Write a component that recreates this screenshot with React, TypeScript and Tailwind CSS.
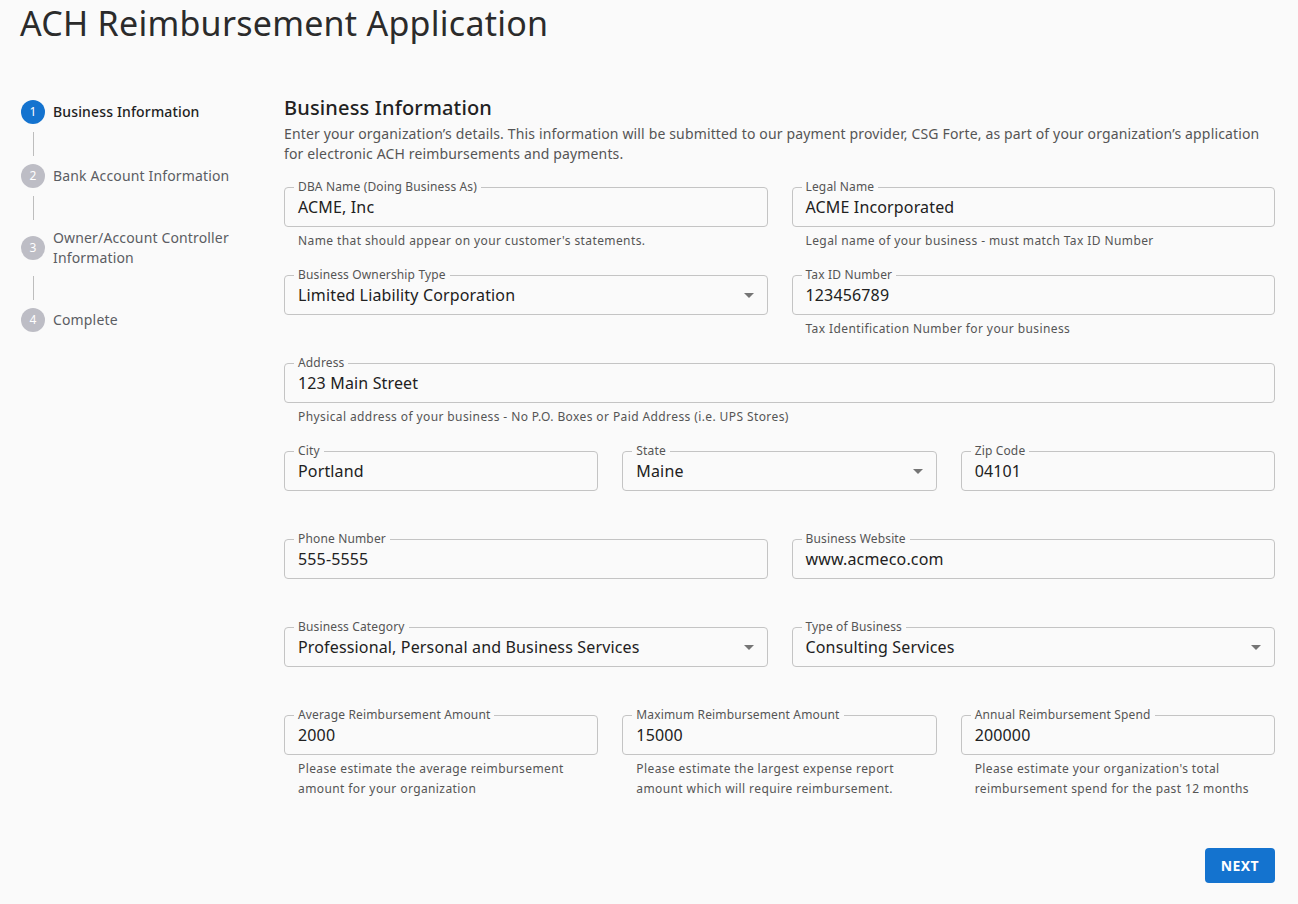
import { ReactNode } from "react";

const steps = [
  { n: 1, label: "Business Information", active: true },
  { n: 2, label: "Bank Account Information", active: false },
  { n: 3, label: "Owner/Account Controller Information", active: false },
  { n: 4, label: "Complete", active: false },
];

function Caret() {
  return (
    <svg width="10" height="5" viewBox="0 0 10 5" className="shrink-0">
      <path d="M0 0h10L5 5z" fill="#757575" />
    </svg>
  );
}

function Field({
  label,
  value,
  helper,
  select,
}: {
  label: string;
  value: string;
  helper?: ReactNode;
  select?: boolean;
}) {
  return (
    <div className="flex flex-col min-w-0">
      <div className="relative h-10 rounded border border-[#c4c4c4] flex items-center justify-between pl-[13px] pr-[13px]">
        <span className="absolute -top-[8px] left-[9px] bg-[#fafafa] px-[4px] text-[12px] leading-[14px] tracking-[0.15px] text-[#555]">
          {label}
        </span>
        <span className="text-[16px] tracking-[0.15px] text-[#212121]">{value}</span>
        {select && <Caret />}
      </div>
      {helper && (
        <p className="mt-[4px] pl-[14px] text-[12px] leading-[20px] tracking-[0.4px] text-[#555]">
          {helper}
        </p>
      )}
    </div>
  );
}

export default function App() {
  return (
    <div
      className="min-h-[904px] bg-[#fafafa] text-[#212121]"
      style={{ fontFamily: '"Noto Sans", sans-serif' }}
    >
      <div className="px-5 pt-[1px]">
        <h1 className="text-[34px] leading-[44px] tracking-[0.25px] text-[#2b2b2b]">
          ACH Reimbursement Application
        </h1>
      </div>

      <div className="flex pl-[21px] pr-[23px] pt-[49px]">
        {/* Stepper */}
        <nav className="w-[239px] shrink-0 mr-6 pt-[6px]">
          {steps.map((s, i) => (
            <div key={s.n}>
              <div className="flex items-center">
                <span
                  className={
                    s.active
                      ? "w-6 h-6 rounded-full bg-[#1473cf] text-white text-[12px] flex items-center justify-center shrink-0"
                      : "w-6 h-6 rounded-full bg-[#bdbdc5] text-white text-[12px] flex items-center justify-center shrink-0"
                  }
                >
                  {s.n}
                </span>
                <span
                  className={
                    s.active
                      ? "ml-2 text-[14px] leading-5 tracking-[0.15px] font-medium text-[#222]"
                      : "ml-2 text-[14px] leading-5 tracking-[0.15px] text-[#5b5d63]"
                  }
                >
                  {s.n === 3 ? (
                    <>
                      Owner/Account Controller
                      <br />
                      Information
                    </>
                  ) : (
                    s.label
                  )}
                </span>
              </div>
              {i < steps.length - 1 && (
                <div className="ml-[12px] my-2 h-6 w-px bg-[#bdbdbd]" />
              )}
            </div>
          ))}
        </nav>

        {/* Form */}
        <main className="flex-1 min-w-0">
          <h2 className="text-[20px] leading-7 tracking-[0.15px] font-medium text-[#222]">
            Business Information
          </h2>
          <p className="mt-[2px] text-[14px] leading-5 tracking-[0.15px] text-[#555]">
            Enter your organization’s details. This information will be submitted to our payment
            provider, CSG Forte, as part of your organization’s application for electronic ACH
            reimbursements and payments.
          </p>

          <div className="mt-[23px] flex flex-col">
            <div className="grid grid-cols-2 gap-x-6 h-[88px]">
              <Field
                label="DBA Name (Doing Business As)"
                value="ACME, Inc"
                helper="Name that should appear on your customer's statements."
              />
              <Field
                label="Legal Name"
                value="ACME Incorporated"
                helper="Legal name of your business - must match Tax ID Number"
              />
            </div>
            <div className="grid grid-cols-2 gap-x-6 h-[88px]">
              <Field label="Business Ownership Type" value="Limited Liability Corporation" select />
              <Field
                label="Tax ID Number"
                value="123456789"
                helper="Tax Identification Number for your business"
              />
            </div>
            <div className="h-[88px]">
              <Field
                label="Address"
                value="123 Main Street"
                helper="Physical address of your business - No P.O. Boxes or Paid Address (i.e. UPS Stores)"
              />
            </div>
            <div className="grid grid-cols-3 gap-x-6 h-[88px]">
              <Field label="City" value="Portland" />
              <Field label="State" value="Maine" select />
              <Field label="Zip Code" value="04101" />
            </div>
            <div className="grid grid-cols-2 gap-x-6 h-[88px]">
              <Field label="Phone Number" value="555-5555" />
              <Field label="Business Website" value="www.acmeco.com" />
            </div>
            <div className="grid grid-cols-2 gap-x-6 h-[88px]">
              <Field
                label="Business Category"
                value="Professional, Personal and Business Services"
                select
              />
              <Field label="Type of Business" value="Consulting Services" select />
            </div>
            <div className="grid grid-cols-3 gap-x-6">
              <Field
                label="Average Reimbursement Amount"
                value="2000"
                helper={
                  <>
                    Please estimate the average reimbursement
                    <br />
                    amount for your organization
                  </>
                }
              />
              <Field
                label="Maximum Reimbursement Amount"
                value="15000"
                helper={
                  <>
                    Please estimate the largest expense report
                    <br />
                    amount which will require reimbursement.
                  </>
                }
              />
              <Field
                label="Annual Reimbursement Spend"
                value="200000"
                helper={
                  <>
                    Please estimate your organization's total
                    <br />
                    reimbursement spend for the past 12 months
                  </>
                }
              />
            </div>
          </div>

          <div className="flex justify-end mt-[49px]">
            <button className="h-[35px] px-[16px] rounded bg-[#1473cf] text-white text-[14px] font-bold tracking-[0.4px]">
              NEXT
            </button>
          </div>
        </main>
      </div>
    </div>
  );
}
